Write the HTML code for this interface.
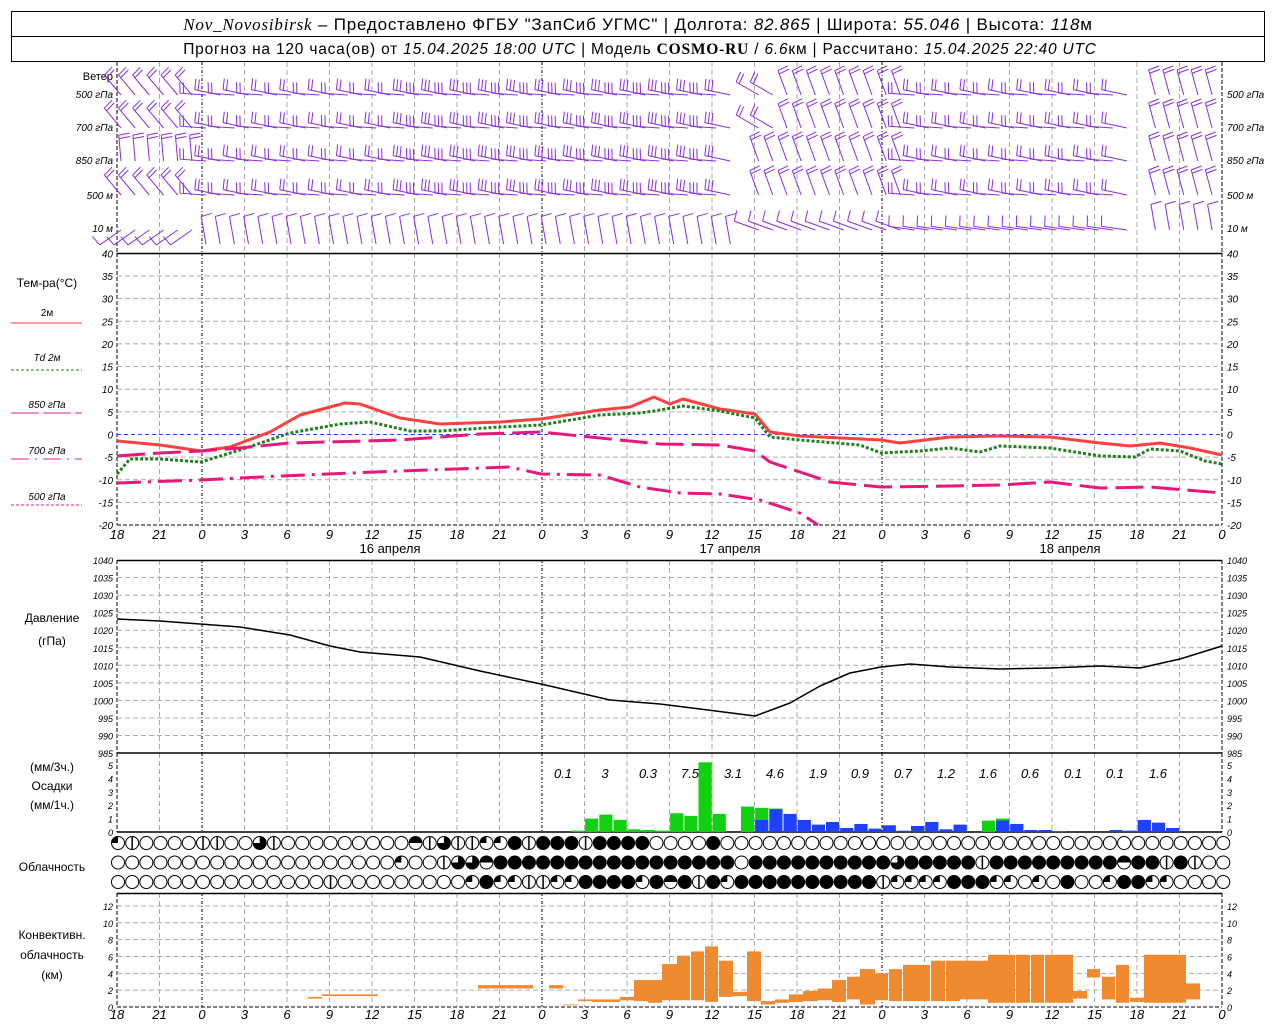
<!DOCTYPE html>
<html><head><meta charset="utf-8"><style>
html,body{margin:0;padding:0;background:#fff;}
svg{display:block;font-family:"Liberation Sans",sans-serif;}
</style></head><body>
<svg id="s" width="1280" height="1024" viewBox="0 0 1280 1024" xmlns="http://www.w3.org/2000/svg">
<rect x="0" y="0" width="1280" height="1024" fill="#fff"/>
<rect x="11.5" y="11.5" width="1253" height="50" fill="none" stroke="#000" stroke-width="1"/>
<line x1="11" y1="36.5" x2="1265" y2="36.5" stroke="#000"/>
<text x="638" y="30" text-anchor="middle" font-size="17" letter-spacing="0.8"><tspan font-family="Liberation Serif" font-style="italic">Nov_Novosibirsk</tspan> – Предоставлено ФГБУ "ЗапСиб УГМС" | Долгота: <tspan font-style="italic">82.865</tspan> | Широта: <tspan font-style="italic">55.046</tspan> | Высота: <tspan font-style="italic">118</tspan>м</text>
<text x="640" y="54" text-anchor="middle" font-size="15.5" letter-spacing="0.8">Прогноз на 120 часа(ов) от <tspan font-style="italic">15.04.2025 18:00 UTC</tspan> | Модель <tspan font-family="Liberation Serif" font-weight="bold">COSMO-RU</tspan> / <tspan font-style="italic">6.6</tspan>км | Рассчитано: <tspan font-style="italic">15.04.2025 22:40 UTC</tspan></text>
<g id="g"></g>
</svg>
<script>
var NS="http://www.w3.org/2000/svg",G=document.getElementById('g');
function el(t,a,txt){var e=document.createElementNS(NS,t);for(var k in a)e.setAttribute(k,a[k]);if(txt!=null)e.textContent=txt;G.appendChild(e);return e;}
function X(h){return 117+h*14.17;}
var L=117,R=1222;
function ln(x1,y1,x2,y2,c,w,d){var a={x1:x1,y1:y1,x2:x2,y2:y2,stroke:c||'#000','stroke-width':w||1};if(d)a['stroke-dasharray']=d;return el('line',a);}
function tx(x,y,s,o){var a={x:x,y:y,'font-size':(o&&o.fs)||11};if(o&&o.a)a['text-anchor']=o.a;if(o&&o.i)a['font-style']='italic';if(o&&o.c)a.fill=o.c;return el('text',a,s);}
var panels=[[62,253],[253,525],[560,753],[753,832],[893,1007]];
panels.forEach(function(p,i){
 for(var k=1;k<26;k++){var x=L+k*42.5;if(k%8==2)ln(x,p[0],x,p[1],'#000',1,'3,2,1,2');else ln(x,p[0],x,p[1],'#aaa',1,'5,3');}
 ln(L,p[0],L,p[1],'#000',1,'4,2');ln(R,p[0],R,p[1],'#000',1,'4,2');
});
function TY(t){return 434.5-t*4.53;}
for(var t=40;t>=-20;t-=5){var y=TY(t);if(t<40&&t>-20&&t!=0)ln(L,y,R,y,'#aaa',1,'5,3');tx(113,y+4,''+t,{a:'end',i:1,fs:10});tx(1227,y+4,''+t,{i:1,fs:10});}
ln(L,TY(0),R,TY(0),'#2244ff',1,'4,3');
ln(L,253.5,R,253.5,'#000',1.5);ln(L,525,R,525,'#000',1,'4,2');
function PY(p){return 560+(1040-p)*3.51;}
for(var p=1040;p>=985;p-=5){var y=PY(p);if(p<1040&&p>985)ln(L,y,R,y,'#aaa',1,'5,3');tx(113,y+4,''+p,{a:'end',i:1,fs:9});tx(1227,y+4,''+p,{i:1,fs:9});}
ln(L,560.5,R,560.5,'#000',1.5);ln(L,753,R,753,'#000',1.5);
function RY(v){return 832-v*13.4;}
for(var v=0;v<=5;v++){tx(113,RY(v)+4,''+v,{a:'end',i:1,fs:9});tx(1227,RY(v)+4,''+v,{i:1,fs:9});}
ln(L,832,R,832,'#000',1.5);
function CY(v){return 1007-v*8.42;}
for(var v=0;v<=12;v+=2){var y=CY(v);if(v>0)ln(L,y,R,y,'#aaa',1,'5,3');tx(113,y+4,''+v,{a:'end',i:1,fs:9});tx(1227,y+4,''+v,{i:1,fs:9});}
ln(L,893.5,R,893.5,'#000',1.5);ln(L,1007,R,1007,'#000',1,'4,2');
var hl=['18','21','0','3','6','9','12','15','18','21','0','3','6','9','12','15','18','21','0','3','6','9','12','15','18','21','0'];
hl.forEach(function(s,k){tx(L+k*42.5,539,s,{a:'middle',i:1,fs:13});tx(L+k*42.5,1019,s,{a:'middle',i:1,fs:13});});
tx(390,553,'16 апреля',{a:'middle',fs:13});tx(730,553,'17 апреля',{a:'middle',fs:13});tx(1070,553,'18 апреля',{a:'middle',fs:13});
tx(113,80,'Ветер',{a:'end',fs:11});
[['500 гПа',98],['700 гПа',131],['850 гПа',164],['500 м',199],['10  м',232]].forEach(function(a){tx(113,a[1],a[0],{a:'end',fs:10,i:1});tx(1227,a[1],a[0],{fs:10,i:1});});
tx(47,287,'Тем-ра(°C)',{a:'middle',fs:12});
tx(47,316,'2м',{a:'middle',fs:10});ln(11,323,82,323,'#ff4040',1);
tx(47,361,'Td  2м',{a:'middle',fs:10,i:1});ln(11,370,82,370,'#208020',1,'3,2');
tx(47,408,'850 гПа',{a:'middle',fs:10,i:1});ln(11,413,82,413,'#e0207a',1,'28,4');
tx(47,454,'700 гПа',{a:'middle',fs:10,i:1});ln(11,459,82,459,'#e0207a',1,'18,6,2,6');
tx(47,500,'500 гПа',{a:'middle',fs:10,i:1});ln(11,505,82,505,'#e0207a',1,'3,2');
tx(52,622,'Давление',{a:'middle',fs:12});tx(52,645,'(гПа)',{a:'middle',fs:12});
tx(52,771,'(мм/3ч.)',{a:'middle',fs:12});tx(52,790,'Осадки',{a:'middle',fs:12});tx(52,809,'(мм/1ч.)',{a:'middle',fs:12});
tx(52,871,'Облачность',{a:'middle',fs:12});
tx(52,939,'Конвективн.',{a:'middle',fs:12});tx(52,959,'облачность',{a:'middle',fs:12});tx(52,979,'(км)',{a:'middle',fs:12});
function poly(pts,c,w,d){el('polyline',{points:pts.map(function(p){return p.join(',')}).join(' '),fill:'none',stroke:c,'stroke-width':w,'stroke-dasharray':d||'none','stroke-linejoin':'round'});}
poly([[117,441],[160,445],[201,451],[230,447],[270,432],[300,415],[345,403],[360,404],[400,418],[440,424],[500,422],[541,419],[600,410],[630,407],[654,397],[670,404],[683,399],[720,409],[755,414],[770,432],[800,436],[881,440],[900,443],[950,437],[1000,436],[1050,437],[1100,443],[1130,446],[1160,443],[1190,448],[1222,455]],'#ff4040',3);
poly([[117,474],[130,459],[160,459],[201,462],[240,450],[290,433],[340,424],[370,422],[410,431],[440,431],[500,427],[541,425],[600,415],[640,413],[654,411],[683,406],[720,411],[755,418],[770,437],[800,440],[860,445],[881,453],[920,451],[950,448],[980,452],[1000,446],[1050,448],[1100,456],[1135,457],[1150,449],[1180,451],[1205,461],[1222,464]],'#208020',3,'3,2');
poly([[117,456],[160,453],[201,451],[240,448],[290,443],[400,440],[480,434],[541,432],[600,438],[660,444],[720,445],[755,451],[770,462],[800,472],[830,482],[881,487],[950,486],[1000,485],[1050,482],[1100,488],[1150,487],[1222,493]],'#e8187a',3,'28,8');
poly([[117,483],[201,480],[280,476],[400,471],[510,467],[541,474],[600,475],[640,487],[680,493],[720,494],[760,500],[800,513],[818,525]],'#e8187a',3,'24,7,3,7');
poly([[117,619],[160,621],[240,627],[290,635],[330,646],[360,652],[420,657],[480,671],[541,684],[610,700],[660,704],[700,709],[755,716],[790,703],[820,686],[850,673],[881,667],[910,664],[950,667],[1000,669],[1050,668],[1100,666],[1140,668],[1180,659],[1222,646]],'#000',1.5);
var pr=[[32,.1,0],[33,1,0],[34,1.3,0],[35,.9,0],[36,.2,0],[37,.15,0],[38,.1,0],[39,1.4,0],[40,1.2,0],[41,5.2,0],[42,1.35,0],[44,1.9,0],[45,1.8,.9],[46,1.75,1.7],[47,0,1.35],[48,0,.9],[49,0,.55],[50,0,.75],[51,0,.3],[52,0,.6],[53,0,.25],[54,0,.5],[55,0,.1],[56,0,.45],[57,0,.75],[58,0,.2],[59,0,.55],[61,.85,0],[62,1,.85],[63,0,.6],[64,0,.15],[65,0,.15],[66,0,.05],[70,0,.15],[71,0,.1],[72,0,.9],[73,0,.7],[74,0,.3]];
pr.forEach(function(b){var x=X(b[0]);if(b[1]>0)el('rect',{x:x+.5,y:RY(b[1]),width:13.2,height:832-RY(b[1]),fill:'#10d010'});if(b[2]>0)el('rect',{x:x+.5,y:RY(b[2]),width:13.2,height:832-RY(b[2]),fill:'#2040ff'});});
[['0.1',563],['3',605],['0.3',648],['7.5',690],['3.1',733],['4.6',775],['1.9',818],['0.9',860],['0.7',903],['1.2',946],['1.6',988],['0.6',1030],['0.1',1073],['0.1',1115],['1.6',1158]].forEach(function(a){tx(a[1],778,a[0],{a:'middle',i:1,fs:13});});
function R_(s){var o=[];s.forEach(function(p){for(var i=0;i<p[1];i++)o.push(p[0]);});return o;}
var rows=[
R_([[1,1],[2,1],[0,4],[2,2],[0,2],[3,1],[2,1],[0,9],[5,1],[2,1],[3,1],[2,2],[1,2],[4,1],[2,1],[4,3],[2,1],[4,4],[0,4],[4,1],[0,36]]),
R_([[0,20],[1,1],[0,2],[2,1],[3,2],[5,1],[4,17],[0,1],[4,10],[3,1],[4,5],[2,1],[4,9],[5,1],[4,2],[2,1],[4,1],[2,1],[0,2]]),
R_([[0,15],[2,1],[0,9],[1,1],[4,1],[1,2],[2,2],[1,2],[4,4],[1,1],[4,1],[5,1],[4,1],[2,1],[4,1],[1,1],[4,10],[2,1],[1,4],[4,3],[1,2],[0,1],[1,1],[0,1],[4,1],[0,2],[1,1],[4,2],[1,2],[0,4]])];
rows.forEach(function(r,ri){var cy=843+ri*19.5;for(var h=0;h<79;h++){var c=r[h]||0,cx=X(h)+1,rr=6.5;
 el('circle',{cx:cx,cy:cy,r:rr,fill:c==4?'#000':'#fff',stroke:'#000','stroke-width':1});
 if(c==1)el('path',{d:'M'+cx+','+cy+'V'+(cy-rr)+'A'+rr+','+rr+' 0 0,0 '+(cx-rr)+','+cy+'Z',fill:'#000'});
 if(c==2)ln(cx,cy-rr,cx,cy+rr,'#000',1.5);
 if(c==3)el('path',{d:'M'+cx+','+cy+'H'+(cx-rr)+'A'+rr+','+rr+' 0 1,0 '+cx+','+(cy-rr)+'Z',fill:'#000'});
 if(c==5){el('path',{d:'M'+(cx-rr)+','+cy+'A'+rr+','+rr+' 0 0,1 '+(cx+rr)+','+cy+'Z',fill:'#000'});}
}});
var cv=[[308,322,1,1.2],[322,378,1.3,1.5],[478,533,2.2,2.6],[549,563,2.2,2.6],[563,578,.2,.3],[578,592,.7,.9],[592,620,.6,.9],[620,634,.8,1.2],[634,648,.7,3.2],[648,662,.5,3.2],[662,677,.8,5.1],[677,690,.8,6.1],[691,704,.8,6.6],[705,718,.6,7.2],[719,733,1.2,5.5],[733,747,1.3,1.8],[747,761,.7,6.6],[761,775,.3,.7],[775,789,.5,.9],[789,803,.6,1.5],[803,818,.7,1.9],[818,832,.8,2.2],[832,846,.6,3.2],[847,860,.9,3.6],[860,875,.3,4.5],[875,888,.8,4],[889,902,.7,4.5],[903,930,.7,5],[931,945,.7,5.5],[946,960,.7,5.5],[960,988,.9,5.5],[988,1015,.5,6.2],[1016,1030,.5,6.2],[1031,1044,.5,6.2],[1045,1073,.5,6.2],[1073,1087,1,1.9],[1087,1100,3.5,4.5],[1102,1115,.9,3.6],[1116,1129,.5,5],[1130,1144,.6,1.1],[1144,1186,.5,6.2],[1186,1200,.9,2.8]];
cv.forEach(function(b){el('rect',{x:b[0],y:CY(b[3]),width:b[1]-b[0],height:CY(b[2])-CY(b[3]),fill:'#f08a30'});});
var WC='#8a2be2',lev=[95,128,161,195,230];
function ang(h,li){
 if(li==4){if(h<6)return 215; if(h<45)return 100; if(h<56)return 160; if(h<73)return 172; return 100;}
 if(h<6)return li==2?95:130;
 if(h>=45&&h<56)return li<=1&&h<47?150:110;
 if(h>=73)return 105;
 return h%2?168:176;
}
for(var li=0;li<5;li++){var y0=lev[li];for(var h=0;h<78;h++){
 if((h>=44&&h<45)||(h==72))continue;
 var x0=X(h)+4,a=ang(h,li)*Math.PI/180,len=(li==4&&h>=6&&h<45)?28:26;
 var yy=(li==4&&h>=6&&h<45)?y0+14:y0;
 var ex=x0+Math.cos(a)*len,ey=yy-Math.sin(a)*len;
 ln(x0,yy,ex,ey,WC,1);
 var nb=li==4?1:(h>20&&h<44?3:2);
 for(var b=0;b<nb;b++){var bx=ex-Math.cos(a)*b*3.5,by=ey+Math.sin(a)*b*3.5;var pa=a-Math.PI/2+0.1;
  ln(bx,by,bx+Math.cos(pa)*11,by-Math.sin(pa)*11,WC,1);}
}}
</script>
</body></html>
